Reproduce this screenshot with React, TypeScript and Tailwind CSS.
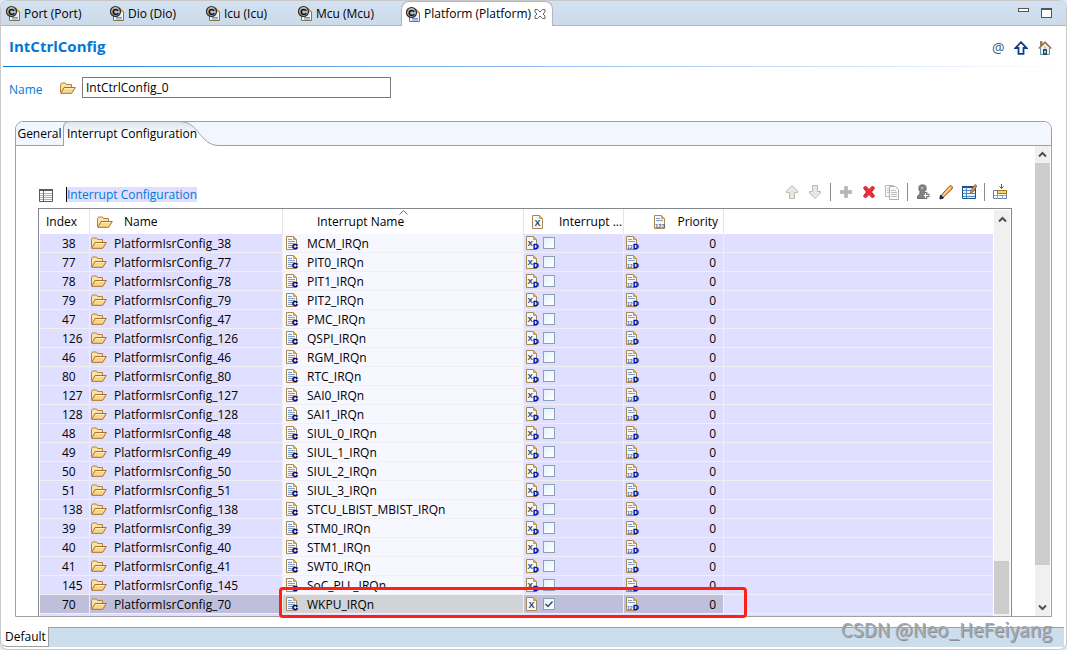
import type { ReactNode } from "react";

type TabItem = { label: string; width: string; active?: boolean };

const EDITOR_TABS: TabItem[] = [
  { label: "Port (Port)", width: "w-[104px]" },
  { label: "Dio (Dio)", width: "w-[96px]" },
  { label: "Icu (Icu)", width: "w-[92px]" },
  { label: "Mcu (Mcu)", width: "w-[108px]" },
  { label: "Platform (Platform)", width: "w-[152px]", active: true },
];

type InterruptRow = { index: number; irq: string; enabled?: boolean };

const ROWS: InterruptRow[] = [
  { index: 38, irq: "MCM_IRQn" },
  { index: 77, irq: "PIT0_IRQn" },
  { index: 78, irq: "PIT1_IRQn" },
  { index: 79, irq: "PIT2_IRQn" },
  { index: 47, irq: "PMC_IRQn" },
  { index: 126, irq: "QSPI_IRQn" },
  { index: 46, irq: "RGM_IRQn" },
  { index: 80, irq: "RTC_IRQn" },
  { index: 127, irq: "SAI0_IRQn" },
  { index: 128, irq: "SAI1_IRQn" },
  { index: 48, irq: "SIUL_0_IRQn" },
  { index: 49, irq: "SIUL_1_IRQn" },
  { index: 50, irq: "SIUL_2_IRQn" },
  { index: 51, irq: "SIUL_3_IRQn" },
  { index: 138, irq: "STCU_LBIST_MBIST_IRQn" },
  { index: 39, irq: "STM0_IRQn" },
  { index: 40, irq: "STM1_IRQn" },
  { index: 41, irq: "SWT0_IRQn" },
  { index: 145, irq: "SoC_PLL_IRQn" },
  { index: 70, irq: "WKPU_IRQn", enabled: true },
];

function FolderIcon() {
  return (
    <svg width="16" height="12" viewBox="0 0 16 12" className="shrink-0">
      <path d="M.5 10.5v-8l1-1.5h4l1 1.5h5v2.5" fill="#fbe3a4" stroke="#b5803a" />
      <path d="M.8 11.3 4 5.5h11.3l-3.6 5.8z" fill="#fbd68a" stroke="#a8702e" strokeLinejoin="round" />
      <path d="M4.6 6.5h9" stroke="#fff0c8" />
    </svg>
  );
}

function PageShape() {
  return (
    <>
      <path d="M.5.5h7l3 3v10H.5z" fill="#f4f8fd" stroke="#a48a52" />
      <path d="M7.5.5v3h3z" fill="#e8b654" stroke="#c99b45" />
    </>
  );
}

/** Page with text lines and the C (configurable) marker. */
function ConfigPageIcon() {
  return (
    <svg width="13" height="14" viewBox="0 0 13 14" className="shrink-0 overflow-visible">
      <PageShape />
      <path d="M2 3.5h4M2 5.5h7M2 7.5h7M2 9.5h4M2 11.5h4" stroke="#7d9cc6" />
      <text x="6" y="13" fontSize="8" fontWeight="700" fill="#00007d" stroke="#00007d" strokeWidth=".6" fontFamily="Liberation Sans, sans-serif">
        C
      </text>
    </svg>
  );
}

function DefaultMark() {
  return (
    <text x="7" y="13" fontSize="8" fontWeight="700" fill="#0000a8" stroke="#0000a8" strokeWidth=".3" fontFamily="Liberation Sans, sans-serif">
      D
    </text>
  );
}

function BooleanIcon({ isDefault }: { isDefault?: boolean }) {
  return (
    <svg width="13" height="14" viewBox="0 0 13 14" className="shrink-0 overflow-visible">
      <PageShape />
      <text
        x={isDefault ? 1.5 : 2.5}
        y={isDefault ? 9.5 : 10.5}
        fontSize={isDefault ? 8 : 9}
        fontWeight="700"
        fill="#27466f"
        fontFamily="Liberation Sans, sans-serif"
      >
        X
      </text>
      {isDefault && <DefaultMark />}
    </svg>
  );
}

function NumberIcon({ isDefault }: { isDefault?: boolean }) {
  return (
    <svg width="13" height="14" viewBox="0 0 13 14" className="shrink-0 overflow-visible">
      <PageShape />
      <path d="M2 3.5h4M2 5.5h7" stroke="#7d9cc6" />
      <text
        x="1"
        y="12.5"
        fontSize={isDefault ? 5 : 6}
        fontWeight="700"
        fill="#41658f"
        fontFamily="Liberation Sans, sans-serif"
      >
        {isDefault ? "12" : "123"}
      </text>
      {isDefault && <DefaultMark />}
    </svg>
  );
}

function EditorIcon() {
  return (
    <svg width="14" height="15" viewBox="0 0 14 15" className="shrink-0 overflow-visible">
      <path d="M3.5 2.5h7l3 3v9h-10z" fill="#eef4fc" stroke="#8b7442" />
      <path d="M10.5 2.5v3h3z" fill="#e8b654" stroke="#d19b34" />
      <path d="M6 11.5h6M6 13h6" stroke="#6e92c4" />
      <circle cx="5.5" cy="5.500" r="5" fill="#bdbdbd" stroke="#2a2a2a" strokeWidth="1.200" />
      <text x="2.300" y="8.500" fontSize="9" fontWeight="700" fill="#000" stroke="#000" strokeWidth=".3" fontFamily="Liberation Sans, sans-serif">
        C
      </text>
    </svg>
  );
}

function HomeIcon() {
  return (
    <svg width="14" height="16" viewBox="0 0 14 16">
      <path d="M2.500 1.500h1.500v4h-1.500z" fill="#b5655a" stroke="#a0705a" />
      <path d="M2.500 7.500 7 3l4.500 4.500v7h-9z" fill="#e6eefb" stroke="#6f8bb5" />
      <path d="M.7 8.500 7 2l6.300 6.500" fill="none" stroke="#a8753f" strokeWidth="1.500" />
      <path d="M5.500 9.500h3v5h-3z" fill="#2d5a8c" stroke="#1d4775" />
      <path d="M6 6.500h2v2H6zM6 11h2v2H6z" fill="#c9d94a" />
    </svg>
  );
}

function ArrowUpIcon() {
  return (
    <svg width="14" height="14" viewBox="0 0 14 14">
      <path d="M7 1.200 12.500 7H9.500v5.800h-5V7h-3z" fill="#fff" stroke="#0b3f86" strokeWidth="1.800" />
    </svg>
  );
}

function MoveIcon({ down }: { down?: boolean }) {
  return (
    <svg width="16" height="16" viewBox="0 0 16 16" className={down ? "rotate-180" : ""}>
      <path d="M8 1.500 13.500 7v1.500h-3v6h-5v-6h-3V7z" fill="#e9e8e0" stroke="#b9b9b2" />
    </svg>
  );
}

function AddIcon() {
  return (
    <svg width="16" height="16" viewBox="0 0 16 16">
      <path d="M6.500 2.500h3v4h4v3h-4v4h-3v-4h-4v-3h4z" fill="#b4b5ab" stroke="#c1c2ba" />
    </svg>
  );
}

function DeleteIcon() {
  return (
    <svg width="16" height="16" viewBox="0 0 16 16">
      <path d="M2.500 4 4.500 2 8 5.500 11.500 2l2 2L10.500 8l3 4-2 2L8 10.500 4.500 14l-2-2 3-4z" fill="#f02c3c" stroke="#bf1f2c" />
    </svg>
  );
}

function CopyIcon() {
  return (
    <svg width="16" height="16" viewBox="0 0 16 16">
      <path d="M1.500 1.500h8v11h-8z" fill="#fafafa" stroke="#b9b9b9" />
      <path d="M3 4.500h3M3 6.500h3M3 8.500h3" stroke="#c6c6c6" />
      <path d="M5.500 2.500h6l3 3v10h-9z" fill="#fafafa" stroke="#b0b0b0" />
      <path d="M7 6.500h5M7 8.500h6M7 10.500h6M7 12.500h6" stroke="#b9c0c7" />
    </svg>
  );
}

function PawnIcon() {
  return (
    <svg width="16" height="16" viewBox="0 0 16 16">
      <path d="M5 14.500H2.500V12L5 10V7.500L4 6V2.500L5.500 1h4L11 2.500V6L9.500 7.500V10l2 2v2.500z" fill="#858585" stroke="#686868" />
      <path d="M6 3h2v2H6z" fill="#b4b4b4" />
      <path d="M10.500 8v7M7.500 11.500h7" stroke="#777" strokeWidth="3.500" />
      <path d="M10.500 9v5M8.500 11.500h5" stroke="#fff" strokeWidth="1.200" />
    </svg>
  );
}

function PencilIcon() {
  return (
    <svg width="16" height="16" viewBox="0 0 16 16">
      <path d="M2.500 12 11 2.500l2-1 1.500 1.500-.5 2L5 13.500l-3 1z" fill="#f4b36a" stroke="#9c5a22" />
      <path d="M5 11.500 12.500 3.500" stroke="#ffdfb0" />
      <path d="m2 15 .5-4L5.500 14z" fill="#15264f" stroke="#15264f" />
    </svg>
  );
}

function EditTableIcon() {
  return (
    <svg width="16" height="16" viewBox="0 0 16 16">
      <path d="M1.500 2.500h13v12h-13z" fill="#e6f3ff" stroke="#1f4f87" />
      <path d="M1 3h12" stroke="#1f4f87" strokeWidth="2" />
      <path d="M2 6.500h12M2 9.500h12M2 12.500h12M5.500 3v11" stroke="#4b8ac2" />
      <path d="m9.500 9 .5-3 4-5.500 2 1.500-4 6z" fill="#d3905a" stroke="#8a5024" strokeWidth=".7" />
    </svg>
  );
}

function InsertRowIcon() {
  return (
    <svg width="16" height="16" viewBox="0 0 16 16">
      <path d="M1.500 6.500h13v8h-13z" fill="#fff" stroke="#6a7f9e" />
      <path d="M2 11.500h12M5.500 7v8M10.500 11v4" stroke="#91a3c0" />
      <path d="M5.500 6.500h9v3h-9z" fill="#f9d66c" stroke="#ad7412" />
      <path d="M9.500 0v4M7.500 2.500l2 2 2-2" fill="none" stroke="#4a5566" />
    </svg>
  );
}

function TableIcon() {
  return (
    <svg width="14" height="13" viewBox="0 0 14 13" className="shrink-0">
      <path d="M.5.500h13v12H.500z" fill="#fff" stroke="#5a5a5a" />
      <path d="M0 1h14" stroke="#5a5a5a" strokeWidth="2" />
      <path d="M1 4.500h12M1 6.500h12M1 8.500h12M1 10.500h12" stroke="#b0b0b0" />
      <path d="M4.500 2v10" stroke="#707070" />
    </svg>
  );
}

function Chevron({ down }: { down?: boolean }) {
  return (
    <svg width="9" height="7" viewBox="0 0 9 7" className={down ? "rotate-180" : ""}>
      <path d="M1 5.500 4.500 2 8 5.500" fill="none" stroke="#505050" strokeWidth="2" />
    </svg>
  );
}

function ToolButton({ label, children }: { label: string; children: ReactNode }) {
  return (
    <button type="button" aria-label={label} className="flex size-4 items-center justify-center">
      {children}
    </button>
  );
}

function ToolSeparator() {
  return <span className="h-[18px] w-px bg-[#8c8c8c]" />;
}

function EditorTabs() {
  return (
    <div className="flex h-[25px] border-b border-[#b0b4cc] bg-linear-to-b from-[#d3e1f1] to-[#cbdbea]">
      {EDITOR_TABS.map((tab) =>
        tab.active ? (
          <div
            key={tab.label}
            className={`${tab.width} -mb-px flex items-center rounded-t-lg border-x border-t border-[#b0b4cc] bg-white pl-1`}
          >
            <button type="button" className="flex items-center gap-1 whitespace-nowrap">
              <EditorIcon />
              {tab.label}
            </button>
            <button type="button" aria-label="Close tab" className="ml-auto pr-1.5">
              <svg width="12" height="12" viewBox="0 0 12 12">
                <path
                  d="M1 1.500h2.500L6 4l2.500-2.500H11V4L9 6l2 2v2.500H8.500L6 8l-2.500 2.500H1V8l2-2-2-2z"
                  fill="#fff"
                  stroke="#666"
                />
              </svg>
            </button>
          </div>
        ) : (
          <button
            key={tab.label}
            type="button"
            className={`${tab.width} flex items-center gap-1 pt-px pl-[5px] whitespace-nowrap`}
          >
            <EditorIcon />
            {tab.label}
          </button>
        ),
      )}
      <div className="ml-auto flex items-start gap-3 pt-[7px] pr-[14px]">
        <button type="button" aria-label="Minimize" className="h-1 w-[11px] border border-[#555] bg-white" />
        <button type="button" aria-label="Maximize" className="h-[10px] w-[11px] border border-t-2 border-[#555] bg-white" />
      </div>
    </div>
  );
}

function SectionHeader() {
  return (
    <>
      <header className="flex h-10 items-center justify-between pr-[14px] pl-2">
        <h1 className="text-[15px] leading-5 font-bold text-[#0078d7]">IntCtrlConfig</h1>
        <div className="flex items-center gap-[10px] pt-1">
          <button type="button" aria-label="References" className="h-4 w-3 text-sm leading-4 text-[#2f5f8f]">
            @
          </button>
          <button type="button" aria-label="Up">
            <ArrowUpIcon />
          </button>
          <button type="button" aria-label="Home">
            <HomeIcon />
          </button>
        </div>
      </header>
      <div className="mx-0.5 h-px bg-linear-to-r from-[#0078d7] to-white" />
    </>
  );
}

function ConfigTabs() {
  return (
    <div className="flex h-6 rounded-t-lg border-b border-[#a0a0a0] bg-[#f2f7ff]">
      <button type="button" className="w-[47px] whitespace-nowrap">
        General
      </button>
      <button type="button" className="relative -mt-px -mb-px w-[156px] pl-1 text-left whitespace-nowrap">
        <svg width="156" height="25" viewBox="0 0 156 25" className="absolute top-0 left-0">
          <defs>
            <linearGradient id="tabFill" x1="0" y1="0" x2="0" y2="1">
              <stop offset="0" stopColor="#dae5f0" />
              <stop offset="0.600" stopColor="#ffffff" />
            </linearGradient>
          </defs>
          <path d="M.500 25V6Q1 .500 6 .500H116C137 .500 136 24.500 156 24.500V25z" fill="url(#tabFill)" />
          <path d="M.500 25V6Q1 .500 6 .500H116C137 .500 136 24.500 156 24.500" fill="none" stroke="#a0a0a0" />
        </svg>
        <span className="relative">Interrupt Configuration</span>
      </button>
    </div>
  );
}

function TableToolbar() {
  return (
    <div className="flex h-[26px] justify-between">
      <div className="flex items-end gap-[13px] pb-[6px] pl-px">
        <TableIcon />
        <h2 className="h-[15px] border-l border-black bg-[#e0dfff] leading-[15px] text-[#0078d7]">
          Interrupt Configuration
        </h2>
      </div>
      <div className="flex h-5 items-center gap-[7px] pr-1">
        <ToolButton label="Move up">
          <MoveIcon />
        </ToolButton>
        <ToolButton label="Move down">
          <MoveIcon down />
        </ToolButton>
        <ToolSeparator />
        <ToolButton label="Add">
          <AddIcon />
        </ToolButton>
        <ToolButton label="Delete">
          <DeleteIcon />
        </ToolButton>
        <ToolButton label="Duplicate">
          <CopyIcon />
        </ToolButton>
        <ToolSeparator />
        <ToolButton label="Add user element">
          <PawnIcon />
        </ToolButton>
        <ToolButton label="Edit">
          <PencilIcon />
        </ToolButton>
        <ToolButton label="Edit table">
          <EditTableIcon />
        </ToolButton>
        <ToolSeparator />
        <ToolButton label="Insert row">
          <InsertRowIcon />
        </ToolButton>
      </div>
    </div>
  );
}

function EnabledCheckbox({ row }: { row: InterruptRow }) {
  return (
    <span className="grid">
      <input
        type="checkbox"
        defaultChecked={row.enabled}
        aria-label={`Interrupt enabled ${row.irq}`}
        className="peer col-start-1 row-start-1 size-3 appearance-none border border-[#8c9fb8] bg-linear-to-br from-[#e4f2fa] to-white"
      />
      <svg
        width="12"
        height="12"
        viewBox="0 0 12 12"
        className="pointer-events-none invisible col-start-1 row-start-1 peer-checked:visible"
      >
        <path d="m2.500 6 2.500 2.500 4.500-5" fill="none" stroke="#3b4a6b" strokeWidth="1.500" />
      </svg>
    </span>
  );
}

function InterruptTable() {
  return (
    <table className="w-full table-fixed border-separate border-spacing-0 text-left whitespace-nowrap">
      <colgroup>
        <col className="w-[50px]" />
        <col className="w-[193px]" />
        <col className="w-[241px]" />
        <col className="w-[100px]" />
        <col className="w-[100px]" />
        <col />
      </colgroup>
      <thead>
        <tr className="h-[25px] *:border-r *:border-[#e5e5e5] *:p-0 *:font-normal">
          <th>
            <span className="pl-[6px]">Index</span>
          </th>
          <th>
            <span className="flex items-center gap-[11px] pl-[7px]">
              <FolderIcon />
              Name
            </span>
          </th>
          <th aria-sort="ascending" className="relative">
            <span className="pl-[34px]">Interrupt Name</span>
            <svg width="9" height="5" viewBox="0 0 9 5" className="absolute top-px left-[116px]">
              <path d="M.500 4.500l4-4 4 4" fill="none" stroke="#666" />
            </svg>
          </th>
          <th>
            <span className="flex items-center gap-[14px] pl-2">
              <BooleanIcon />
              Interrupt ...
            </span>
          </th>
          <th>
            <span className="flex items-center justify-between pr-[5px] pl-[30px]">
              <NumberIcon />
              Priority
            </span>
          </th>
          <th aria-hidden="true" className="border-r-0!" />
        </tr>
      </thead>
      <tbody>
        {ROWS.map((row) => {
          const cell = row.enabled ? "bg-[#bfbfdb]" : "bg-[#e0dfff]";
          return (
            <tr
              key={row.index}
              className="h-[19px] *:h-[19px] *:border-r *:border-b *:border-[#f0f0f0] *:p-0"
            >
              <td className={cell}>
                <span className="block pt-0.5 pl-[22px]">{row.index}</span>
              </td>
              <td className={cell}>
                <span className="flex items-center gap-[7px] pl-px">
                  <FolderIcon />
                  <span className="pt-0.5">PlatformIsrConfig_{row.index}</span>
                </span>
              </td>
              <td className={row.enabled ? "bg-[#d2d3d7]" : "bg-[#f7f7ff]"}>
                <span className="flex items-center gap-2 pl-[3px]">
                  <ConfigPageIcon />
                  <span className="pt-0.5">{row.irq}</span>
                </span>
              </td>
              <td className={cell}>
                <span className="flex items-center gap-1 pl-0.5">
                  <BooleanIcon isDefault={!row.enabled} />
                  <EnabledCheckbox row={row} />
                </span>
              </td>
              <td className={cell}>
                <span className="flex items-center justify-between pr-[7px] pl-0.5">
                  <NumberIcon isDefault />
                  <span className="pt-0.5">0</span>
                </span>
              </td>
              <td aria-hidden="true" className="border-r-0! bg-[#e0dfff]" />
            </tr>
          );
        })}
      </tbody>
    </table>
  );
}

export default function App() {
  return (
    <div className="flex min-h-screen bg-[#dfe6f5] font-['Open_Sans','Noto_Sans',sans-serif] text-xs leading-4 text-black">
      <main className="relative flex min-w-0 flex-1 flex-col overflow-hidden rounded-lg border border-[#c8c8c8] bg-white">
        <EditorTabs />
        <SectionHeader />

        <div className="mt-[10px] flex h-[21px] items-center pl-2">
          <label htmlFor="config-name" className="w-[51px] pt-1 text-[#0078d7]">
            Name
          </label>
          <FolderIcon />
          <input
            id="config-name"
            type="text"
            defaultValue="IntCtrlConfig_0"
            className="ml-[6px] h-[21px] w-[309px] border border-[#7a7a7a] bg-white px-[3px]"
          />
        </div>

        <section className="mx-[14px] mt-[23px] flex flex-1 flex-col rounded-t-lg border border-[#a0a0a0]">
          <ConfigTabs />
          <div className="flex flex-1">
            <div className="flex min-w-0 flex-1 flex-col pt-9 pr-[23px] pl-[22px]">
              <TableToolbar />
              <div className="relative flex flex-1 border-x border-t border-[#828790] px-px">
                <div className="min-w-0 flex-1">
                  <InterruptTable />
                  <div className="h-0.5 bg-[#e0dfff]" />
                </div>
                <div className="mt-px ml-px flex w-4 flex-col items-center bg-[#f0f0f0] pt-[6px]">
                  <Chevron />
                  <div className="mt-auto mr-px mb-0.5 h-[53px] w-[15px] bg-[#cdcdcd]" />
                </div>
                <div className="pointer-events-none absolute -bottom-0.5 left-60 h-[31px] w-[468px] rounded-sm border-3 border-[#ff2015]" />
              </div>
            </div>
            <div className="mr-px flex w-[15px] flex-col items-center bg-[#f0f0f0]">
              <div className="flex h-[17px] items-center">
                <Chevron />
              </div>
              <div className="w-full flex-1 bg-[#cdcdcd]" />
              <div className="flex h-[51px] items-end pb-[5px]">
                <Chevron down />
              </div>
            </div>
          </div>
        </section>

        <footer className="mt-[10px] mr-0.5 mb-0.5 flex h-5">
          <button type="button" className="w-[48px] rounded-bl-md border-r border-b border-[#a0a0a0] bg-white pl-0.5 whitespace-nowrap">
            Default
          </button>
          <div className="flex-1 border-t border-[#a0a0a0] bg-[#ccddec]" />
        </footer>

        <p className="absolute right-[14px] bottom-2 font-['Noto_Sans_CJK_SC',sans-serif] text-[19px] leading-6 text-[#a4a9af] [text-shadow:1px_1px_0_#8b8f94]">
          CSDN @Neo_HeFeiyang
        </p>
      </main>
    </div>
  );
}
